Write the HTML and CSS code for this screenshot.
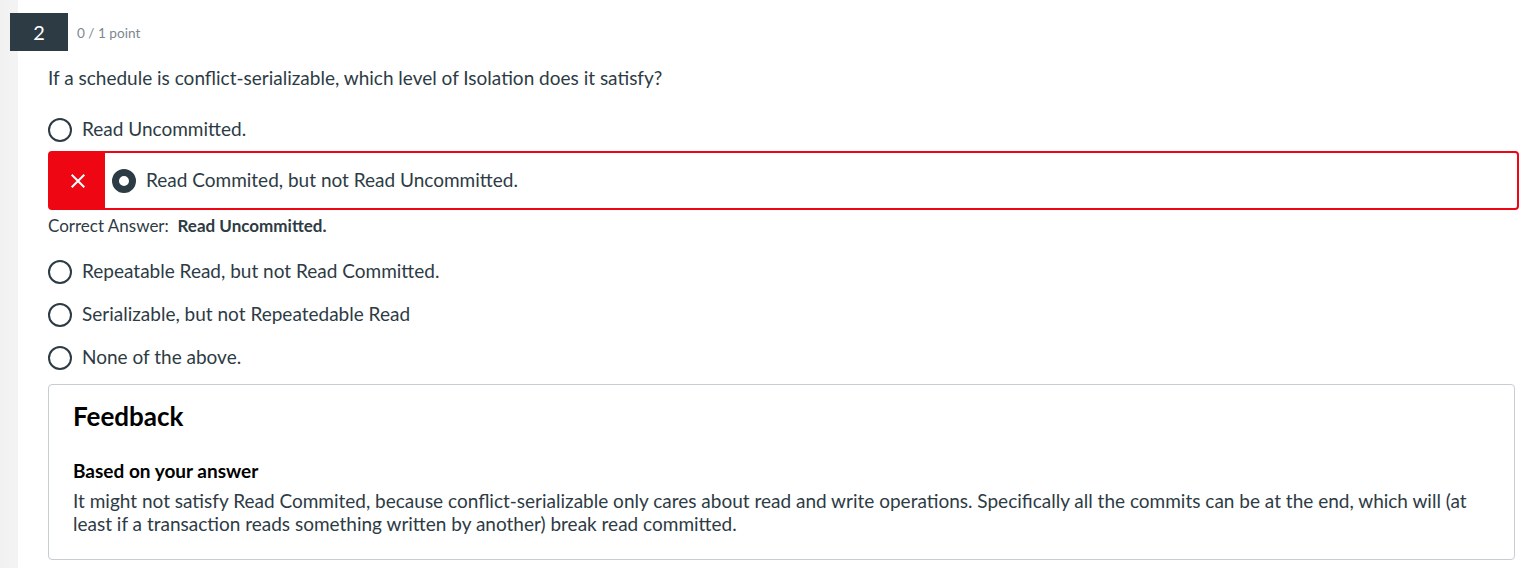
FILE: index.html
```html
<!DOCTYPE html>
<html lang="en">
<head>
<meta charset="utf-8">
<title>Quiz question 2</title>
<link rel="stylesheet" href="styles.css">
</head>
<body>
<div class="page">
  <div class="header">
    <div class="qnum">2</div>
    <div class="points">0 / 1 point</div>
  </div>
  <div class="body">
    <div class="question">If a schedule is conflict-serializable, which level of Isolation does it satisfy?</div>
    <div class="answers">
      <div class="option"><span class="radio"></span><span class="label">Read Uncommitted.</span></div>
      <div class="option incorrect">
        <span class="mark"><svg width="14" height="14" viewBox="0 0 14 14"><path d="M1.5 1.5 L12.5 12.5 M12.5 1.5 L1.5 12.5" stroke="#fff" stroke-width="1.8" fill="none"/></svg></span>
        <span class="radio checked"></span><span class="label">Read Commited, but not Read Uncommitted.</span>
      </div>
      <div class="correct">Correct Answer:&nbsp; <strong>Read Uncommitted.</strong></div>
      <div class="option"><span class="radio"></span><span class="label">Repeatable Read, but not Read Committed.</span></div>
      <div class="option"><span class="radio"></span><span class="label">Serializable, but not Repeatedable Read</span></div>
      <div class="option"><span class="radio"></span><span class="label">None of the above.</span></div>
    </div>
    <div class="feedback">
      <h2 class="fb-title">Feedback</h2>
      <h3 class="fb-sub">Based on your answer</h3>
      <p class="fb-text">It might not satisfy Read Commited, because conflict-serializable only cares about read and write operations. Specifically all the commits can be at the end, which will (at least if a transaction reads something written by another) break read committed.</p>
    </div>
  </div>
</div>
</body>
</html>
```

FILE: styles.css
```css
html, body {
  margin: 0;
  padding: 0;
  background: #fff;
}
body {
  font-family: Lato, "Noto Sans", "Liberation Sans", sans-serif;
  color: #2d3b45;
}
.page {
  min-height: 568px;
  background: linear-gradient(to right, #f1f1f1 0, #f4f4f4 18px, #fff 18px);
  padding: 13px 0 0 10px;
  box-sizing: border-box;
}
.header {
  display: flex;
  align-items: center;
  height: 38px;
}
.qnum {
  width: 58px;
  height: 38px;
  background: #2d3b45;
  color: #fff;
  font-size: 20px;
  display: flex;
  align-items: center;
  justify-content: center;
}
.points {
  margin-left: 9px;
  padding-top: 2px;
  font-size: 13.6px;
  color: #7b8890;
}
.body {
  padding-left: 38px;
}
.question {
  margin-top: 15px;
  font-size: 19px;
  line-height: 24px;
}
.answers {
  margin-top: 18px;
}
.option {
  display: flex;
  align-items: center;
  height: 43px;
  font-size: 19px;
}
.label {
  margin-left: 10px;
  position: relative;
  top: -1px;
}
.radio {
  width: 24px;
  height: 24px;
  border: 2px solid #2d3b45;
  border-radius: 50%;
  box-sizing: border-box;
  flex: none;
}
.radio.checked {
  border-width: 7px;
}
.incorrect {
  height: 59px;
  border: 2px solid #ee0612;
  border-radius: 4px;
  box-sizing: border-box;
  margin-right: 1px;
}
.mark {
  align-self: stretch;
  width: 55px;
  background: #ee0612;
  display: flex;
  align-items: center;
  justify-content: center;
  margin-right: 7px;
}
.mark svg {
  width: 16px;
  height: 16px;
}
.correct {
  margin-top: 6px;
  margin-bottom: 14px;
  font-size: 17px;
  line-height: 20px;
}
.correct strong {
  font-weight: 700;
}
.feedback {
  margin-top: 5px;
  margin-right: 5px;
  border: 1px solid #c7cdd1;
  border-radius: 4px;
  padding: 15px 24px 24px 24px;
}
.fb-title {
  margin: 0;
  font-size: 26px;
  line-height: 32px;
  font-weight: 700;
  color: #000;
}
.fb-sub {
  margin: 27px 0 0 0;
  font-size: 19px;
  line-height: 23px;
  font-weight: 700;
  color: #000;
}
.fb-text {
  margin: 7px 0 0 0;
  font-size: 19px;
  line-height: 23px;
}
```
